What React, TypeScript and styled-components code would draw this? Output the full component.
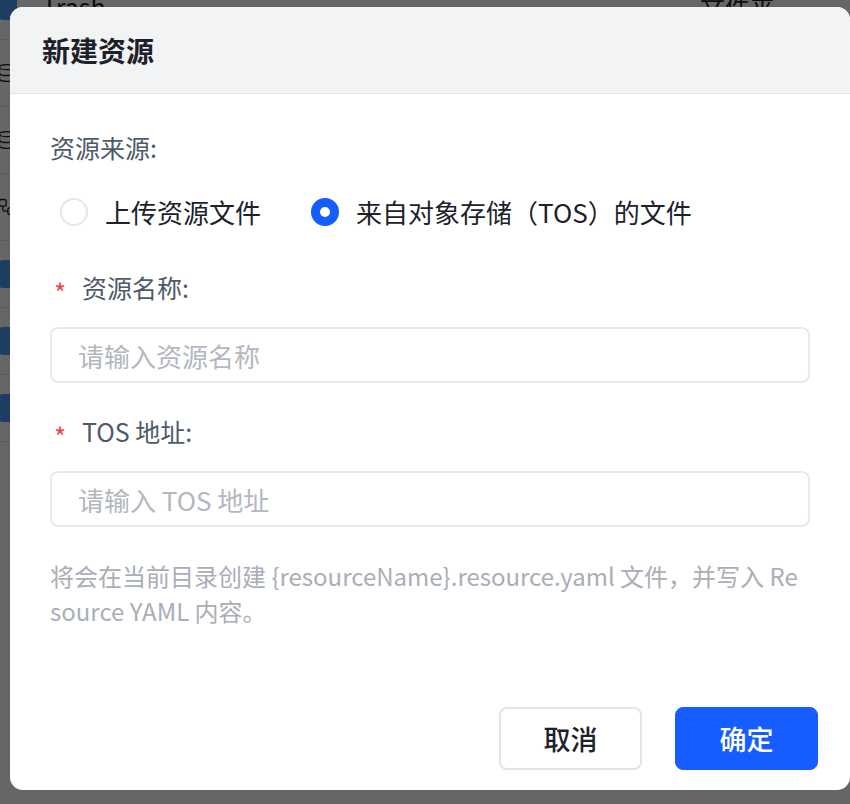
import React, { useState } from "react";
import styled, { createGlobalStyle } from "styled-components";
import { Database, Workflow } from "lucide-react";

const GlobalStyle = createGlobalStyle`
  html, body {
    margin: 0;
    padding: 0;
    height: 100%;
    overflow: hidden;
    font-family: "Noto Sans CJK SC", "Noto Sans", "Liberation Sans", sans-serif;
  }
`;

/* page underneath the dialog */
const Page = styled.div`
  width: 850px;
  height: 804px;
  background: #ffffff;
  overflow: hidden;
  position: relative;
`;

const FileList = styled.div`
  margin-top: -27px;
  display: flex;
  flex-direction: column;
`;

const FileRow = styled.div`
  height: 67px;
  display: flex;
  align-items: center;
  border-bottom: 1px solid #e6e7ea;
  box-sizing: border-box;
  font-size: 25px;
  color: #222;
`;

const RowIcon = styled.div<{ $blue?: boolean }>`
  width: 20px;
  height: ${(p) => (p.$blue ? "28px" : "auto")};
  margin-left: -3px;
  border-radius: 6px;
  background: ${(p) => (p.$blue ? "#4a9cf0" : "transparent")};
  color: #222;
  display: flex;
  align-items: center;
`;

const FileName = styled.span`
  margin-left: 25px;
  flex: 1;
`;

const FileType = styled.span`
  width: 150px;
`;

const Mask = styled.div`
  position: absolute;
  inset: 0;
  background: rgba(0, 0, 0, 0.6);
`;

const Dialog = styled.div`
  position: absolute;
  left: 10px;
  top: 7px;
  width: 840px;
  height: 783px;
  background: #fff;
  border-radius: 13px;
  overflow: hidden;
  display: flex;
  flex-direction: column;
`;

const Header = styled.div`
  height: 87px;
  flex-shrink: 0;
  box-sizing: border-box;
  background: #f2f3f5;
  border-bottom: 1px solid #e5e6eb;
  display: flex;
  align-items: center;
  padding: 0 32px;
  font-size: 28px;
  font-weight: 700;
  color: #1d2129;
`;

const Body = styled.div`
  flex: 1;
  padding: 36px 40px 0;
  display: flex;
  flex-direction: column;
`;

const Label = styled.div`
  height: 35px;
  line-height: 35px;
  font-size: 25px;
  color: #4e5969;
  display: flex;
  align-items: center;
`;

const Star = styled.span`
  color: #f53f3f;
  font-size: 26px;
  width: 32px;
  padding-left: 4px;
  box-sizing: border-box;
  position: relative;
  top: 4px;
`;

const RadioGroup = styled.div`
  display: flex;
  align-items: center;
  gap: 50px;
  height: 35px;
  margin: 29px 0 41px 10px;
`;

const RadioOption = styled.label`
  display: flex;
  align-items: center;
  gap: 17px;
  font-size: 26px;
  color: #1d2129;
  cursor: pointer;
`;

const RadioDot = styled.span<{ $checked: boolean }>`
  width: 28px;
  height: 28px;
  box-sizing: border-box;
  border-radius: 50%;
  border: ${(p) => (p.$checked ? "9px solid #165dff" : "2px solid #e5e6eb")};
  background: #fff;
`;

const Input = styled.input`
  height: 56px;
  box-sizing: border-box;
  border: 2px solid #e8e9ed;
  border-radius: 8px;
  padding: 0 26px;
  font-size: 26px;
  font-family: inherit;
  color: #1d2129;
  outline: none;
  margin-top: 22px;
  &::placeholder {
    color: #b2b7c0;
  }
`;

const FieldGap = styled.div`
  height: 31px;
`;

const Hint = styled.p`
  margin: 31px 0 0;
  max-width: 752px;
  font-size: 24px;
  line-height: 35px;
  color: #a9aeb8;
  word-break: break-all;
`;

const Footer = styled.div`
  display: flex;
  justify-content: flex-end;
  gap: 33px;
  padding: 0 32px 20px;
`;

const Button = styled.button<{ $primary?: boolean }>`
  width: 143px;
  height: 63px;
  border-radius: 8px;
  font-family: inherit;
  font-size: 27px;
  font-weight: 500;
  cursor: pointer;
  border: ${(p) => (p.$primary ? "1px solid #165dff" : "2px solid #e3e4e8")};
  background: ${(p) => (p.$primary ? "#165dff" : "#fff")};
  color: ${(p) => (p.$primary ? "#fff" : "#1d2129")};
`;

const rows = [
  { name: "Trash", type: "文件夹", icon: "blue" },
  { name: "", type: "", icon: "db" },
  { name: "", type: "", icon: "db" },
  { name: "", type: "", icon: "flow" },
  { name: "", type: "", icon: "blue" },
  { name: "", type: "", icon: "blue" },
  { name: "", type: "", icon: "blue" },
];

export default function App() {
  const [source, setSource] = useState<"upload" | "tos">("tos");

  return (
    <Page>
      <GlobalStyle />
      <FileList>
        {rows.map((r, i) => (
          <FileRow key={i}>
            <RowIcon $blue={r.icon === "blue"}>
              {r.icon === "db" && <Database size={22} strokeWidth={1.6} />}
              {r.icon === "flow" && <Workflow size={22} strokeWidth={1.6} />}
            </RowIcon>
            <FileName>{r.name}</FileName>
            <FileType>{r.type}</FileType>
          </FileRow>
        ))}
      </FileList>
      <Mask />
      <Dialog>
        <Header>新建资源</Header>
        <Body>
          <Label>资源来源:</Label>
          <RadioGroup>
            <RadioOption onClick={() => setSource("upload")}>
              <RadioDot $checked={source === "upload"} />
              上传资源文件
            </RadioOption>
            <RadioOption onClick={() => setSource("tos")}>
              <RadioDot $checked={source === "tos"} />
              来自对象存储（TOS）的文件
            </RadioOption>
          </RadioGroup>
          <Label>
            <Star>*</Star>资源名称:
          </Label>
          <Input placeholder="请输入资源名称" />
          <FieldGap />
          <Label>
            <Star>*</Star>TOS 地址:
          </Label>
          <Input placeholder="请输入 TOS 地址" />
          <Hint>
            将会在当前目录创建 {"{resourceName}"}.resource.yaml 文件，并写入 Resource YAML 内容。
          </Hint>
        </Body>
        <Footer>
          <Button>取消</Button>
          <Button $primary>确定</Button>
        </Footer>
      </Dialog>
    </Page>
  );
}
